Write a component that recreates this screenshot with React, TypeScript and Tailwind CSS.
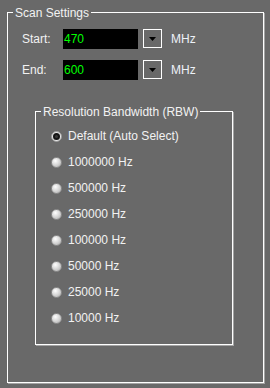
import React from "react";

const font = { fontFamily: '"Liberation Sans", Arial, sans-serif' };

function Radio({ label, checked }: { label: string; checked?: boolean }) {
  return (
    <div className="flex h-[26px] items-center">
      {checked ? (
        <div className="flex h-[11px] w-[11px] items-center justify-center rounded-full border border-[#9a9a9a] bg-[#e6e6e6]">
          <div className="h-[7px] w-[7px] rounded-full border-2 border-[#151515] bg-[#3a3a3a]" />
        </div>
      ) : (
        <div className="h-[11px] w-[11px] rounded-full border border-[#8e8e8e] bg-[radial-gradient(circle_at_38%_32%,#ffffff,#d2d2d2_55%,#a6a6a6)]" />
      )}
      <span className="ml-[6px] text-[12px] leading-[14px] text-[#f2f2f2]">{label}</span>
    </div>
  );
}

function FreqRow({ label, value }: { label: string; value: string }) {
  return (
    <div className="flex h-[20px] items-center">
      <span className="w-[41px] text-[12px] leading-[14px] text-[#f2f2f2]">{label}</span>
      <div className="flex h-[20px] w-[75px] items-center bg-black pl-[1px] text-[12px] leading-[14px] text-[#00ff00]">
        {value}
      </div>
      <div className="ml-[5px] flex h-[19px] w-[19px] items-center justify-center self-start border border-white">
        <svg width="7" height="4" viewBox="0 0 7 4">
          <polygon points="0,0 7,0 3.5,4" fill="#000" />
        </svg>
      </div>
      <span className="ml-[9px] text-[12px] leading-[14px] text-[#eef2f8]">MHz</span>
    </div>
  );
}

export default function App() {
  const options = [
    "1000000 Hz",
    "500000 Hz",
    "250000 Hz",
    "100000 Hz",
    "50000 Hz",
    "25000 Hz",
    "10000 Hz",
  ];
  return (
    <div className="h-[388px] w-[270px] overflow-hidden bg-[#696969] pl-[7px] pt-[12px]" style={font}>
      <div className="relative h-[371px] w-[257px] border border-white shadow-[1px_1px_0_#a4a4a4] pl-[14px] pt-[16px]">
        <span className="absolute -top-[7px] left-[5px] bg-[#696969] px-[2px] text-[12px] leading-[14px] text-[#f2f2f2]">
          Scan Settings
        </span>
        <FreqRow label="Start:" value="470" />
        <div className="h-[11px]" />
        <FreqRow label="End:" value="600" />
        <div className="relative ml-[13px] mt-[31px] h-[234px] w-[198px] border border-white shadow-[1px_1px_0_#a4a4a4] pl-[15px] pt-[11px]">
          <span className="absolute -top-[7px] left-[5px] bg-[#696969] px-[2px] text-[12px] leading-[14px] text-[#f2f2f2]">
            Resolution Bandwidth (RBW)
          </span>
          <Radio label="Default (Auto Select)" checked />
          {options.map((o) => (
            <Radio key={o} label={o} />
          ))}
        </div>
      </div>
    </div>
  );
}
